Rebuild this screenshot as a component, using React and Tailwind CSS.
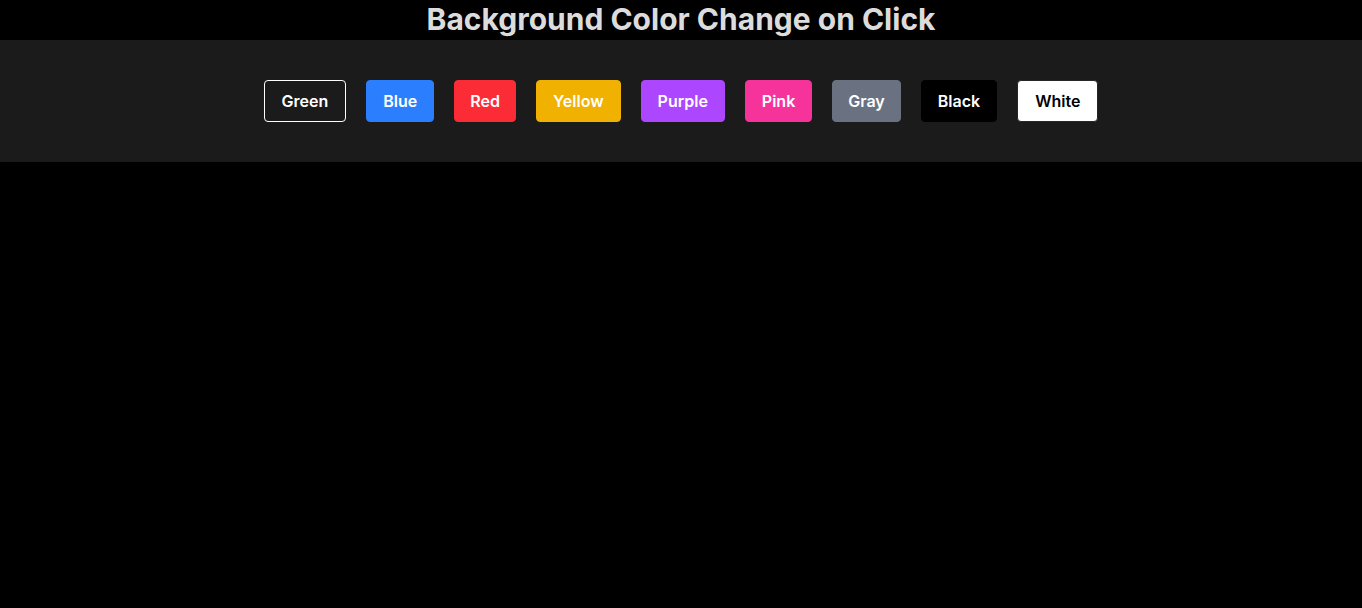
import React, { useState } from 'react';

const colors = [
  { name: 'Green', btn: 'px-[17px] bg-transparent border-white text-white' },
  { name: 'Blue', btn: 'px-4 bg-blue-500 border-blue-500 text-white' },
  { name: 'Red', btn: 'px-[15px] bg-red-500 border-red-500 text-white' },
  { name: 'Yellow', btn: 'px-4 bg-yellow-500 border-yellow-500 text-white' },
  { name: 'Purple', btn: 'px-4 bg-purple-500 border-purple-500 text-white' },
  { name: 'Pink', btn: 'px-4 bg-pink-500 border-pink-500 text-white' },
  { name: 'Gray', btn: 'px-[15px] bg-gray-500 border-gray-500 text-white' },
  { name: 'Black', btn: 'px-4 bg-black border-black text-white' },
  { name: 'White', btn: 'px-[17px] bg-white border-neutral-800 text-black' },
];

const App = () => {
  const [bg, setBg] = useState('Black');

  return (
    <div className="min-h-[608px] bg-black font-['Inter',sans-serif]">
      {/* Header */}
      <h1 className="text-center text-3xl font-bold leading-[38px] pb-0.5 text-[#dcdcdc]">
        Background Color Change on Click
      </h1>

      {/* Buttons */}
      <div className="flex justify-center gap-5 bg-[#1b1b1b] py-10">
        {colors.map((c) => (
          <button
            key={c.name}
            type="button"
            onClick={() => setBg(c.name)}
            className={`rounded border py-2 text-base font-semibold leading-6 ${c.btn}`}
          >
            {c.name}
          </button>
        ))}
      </div>
    </div>
  );
};

export default App;
